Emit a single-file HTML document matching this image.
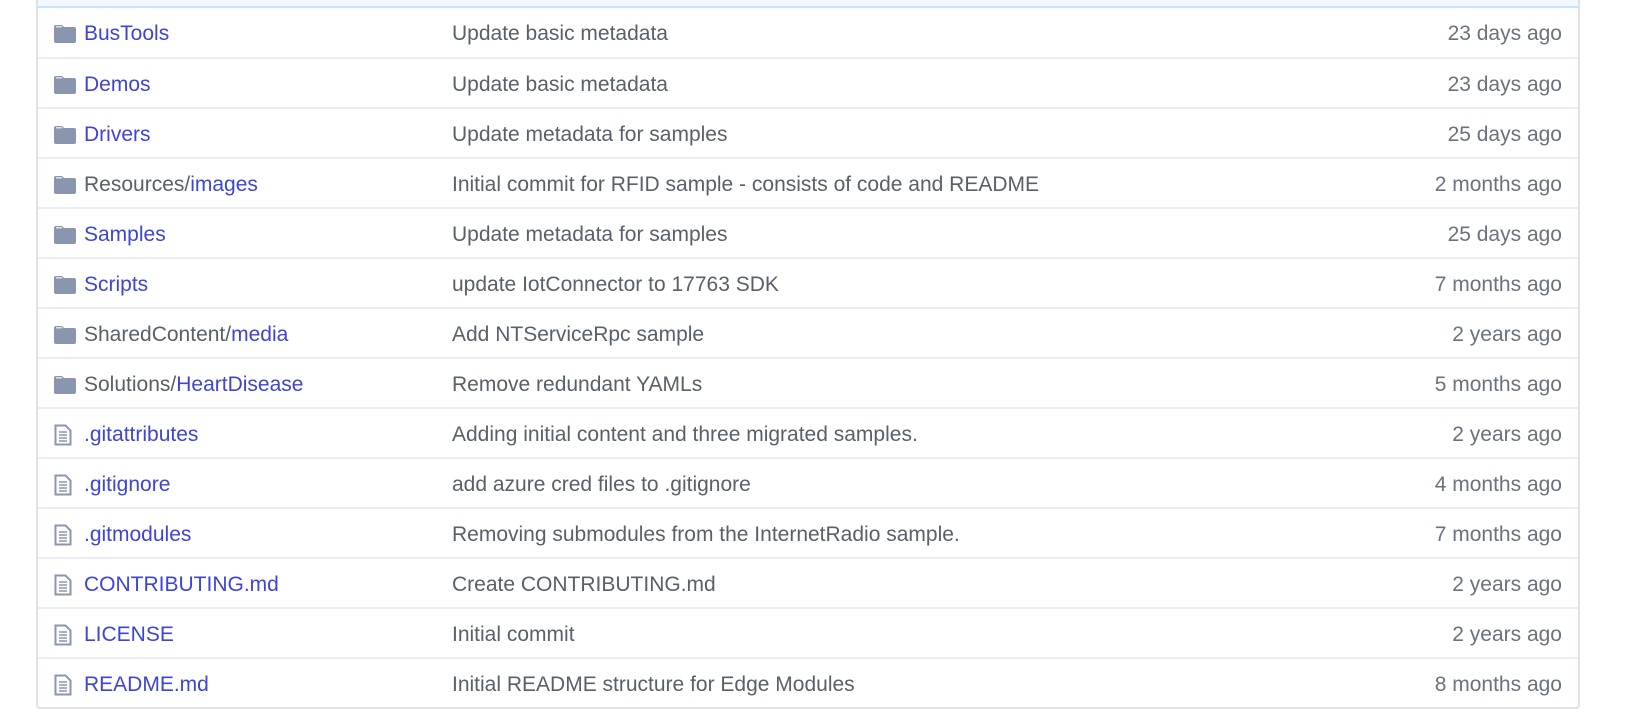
<!DOCTYPE html>
<html><head><meta charset="utf-8"><style>
body{margin:0;background:#fff;font-family:"Liberation Sans",sans-serif;width:1625px;height:717px;overflow:hidden;position:relative}
.top{position:absolute;left:36px;width:1544px;top:0;background:#f1f8ff;border-left:2px solid #dde3ea;border-right:2px solid #dde3ea;box-sizing:border-box;border-bottom:2px solid #c8e1ff;height:8px}
.tbl{position:absolute;left:36px;top:8px;width:1544px;border:2px solid #dde3ea;border-top:none;border-radius:0 0 4px 4px;box-sizing:border-box}
.row{height:50px;border-top:2px solid #eaecef;position:relative;font-size:21px;line-height:52px;box-sizing:border-box}
.row:first-child{border-top:none;height:49px}
.ic{position:absolute;left:16px;top:17px}
.n{position:absolute;left:46px;color:#3d44d6}
.n span{color:#586069}
.m{position:absolute;left:414px;color:#586069}
.a{position:absolute;right:16px;color:#6a737d}
</style></head><body>
<div class="top"></div>
<div class="tbl">
<div class="row"><svg class="ic" width="22" height="18"><path d="M0 2a2 2 0 0 1 2-2h6l2 2h10a2 2 0 0 1 2 2v12a2 2 0 0 1-2 2H2a2 2 0 0 1-2-2z" fill="#8a96ae"/><rect x="2" y="1" width="6" height="1.5" fill="#fff" opacity=".7"/></svg><span class="n">BusTools</span><span class="m">Update basic metadata</span><span class="a">23 days ago</span></div>
<div class="row"><svg class="ic" width="22" height="18"><path d="M0 2a2 2 0 0 1 2-2h6l2 2h10a2 2 0 0 1 2 2v12a2 2 0 0 1-2 2H2a2 2 0 0 1-2-2z" fill="#8a96ae"/><rect x="2" y="1" width="6" height="1.5" fill="#fff" opacity=".7"/></svg><span class="n">Demos</span><span class="m">Update basic metadata</span><span class="a">23 days ago</span></div>
<div class="row"><svg class="ic" width="22" height="18"><path d="M0 2a2 2 0 0 1 2-2h6l2 2h10a2 2 0 0 1 2 2v12a2 2 0 0 1-2 2H2a2 2 0 0 1-2-2z" fill="#8a96ae"/><rect x="2" y="1" width="6" height="1.5" fill="#fff" opacity=".7"/></svg><span class="n">Drivers</span><span class="m">Update metadata for samples</span><span class="a">25 days ago</span></div>
<div class="row"><svg class="ic" width="22" height="18"><path d="M0 2a2 2 0 0 1 2-2h6l2 2h10a2 2 0 0 1 2 2v12a2 2 0 0 1-2 2H2a2 2 0 0 1-2-2z" fill="#8a96ae"/><rect x="2" y="1" width="6" height="1.5" fill="#fff" opacity=".7"/></svg><span class="n"><span>Resources/</span>images</span><span class="m">Initial commit for RFID sample - consists of code and README</span><span class="a">2 months ago</span></div>
<div class="row"><svg class="ic" width="22" height="18"><path d="M0 2a2 2 0 0 1 2-2h6l2 2h10a2 2 0 0 1 2 2v12a2 2 0 0 1-2 2H2a2 2 0 0 1-2-2z" fill="#8a96ae"/><rect x="2" y="1" width="6" height="1.5" fill="#fff" opacity=".7"/></svg><span class="n">Samples</span><span class="m">Update metadata for samples</span><span class="a">25 days ago</span></div>
<div class="row"><svg class="ic" width="22" height="18"><path d="M0 2a2 2 0 0 1 2-2h6l2 2h10a2 2 0 0 1 2 2v12a2 2 0 0 1-2 2H2a2 2 0 0 1-2-2z" fill="#8a96ae"/><rect x="2" y="1" width="6" height="1.5" fill="#fff" opacity=".7"/></svg><span class="n">Scripts</span><span class="m">update IotConnector to 17763 SDK</span><span class="a">7 months ago</span></div>
<div class="row"><svg class="ic" width="22" height="18"><path d="M0 2a2 2 0 0 1 2-2h6l2 2h10a2 2 0 0 1 2 2v12a2 2 0 0 1-2 2H2a2 2 0 0 1-2-2z" fill="#8a96ae"/><rect x="2" y="1" width="6" height="1.5" fill="#fff" opacity=".7"/></svg><span class="n"><span>SharedContent/</span>media</span><span class="m">Add NTServiceRpc sample</span><span class="a">2 years ago</span></div>
<div class="row"><svg class="ic" width="22" height="18"><path d="M0 2a2 2 0 0 1 2-2h6l2 2h10a2 2 0 0 1 2 2v12a2 2 0 0 1-2 2H2a2 2 0 0 1-2-2z" fill="#8a96ae"/><rect x="2" y="1" width="6" height="1.5" fill="#fff" opacity=".7"/></svg><span class="n"><span>Solutions/</span>HeartDisease</span><span class="m">Remove redundant YAMLs</span><span class="a">5 months ago</span></div>
<div class="row"><svg class="ic" style="top:15px" width="18" height="22"><path d="M1.5 1.5h10l5 5v14h-15z" fill="none" stroke="#8a96ae" stroke-width="2"/><path d="M5 8h8M5 11h8M5 14h8M5 17h8" stroke="#8a96ae" stroke-width="1.5"/></svg><span class="n">.gitattributes</span><span class="m">Adding initial content and three migrated samples.</span><span class="a">2 years ago</span></div>
<div class="row"><svg class="ic" style="top:15px" width="18" height="22"><path d="M1.5 1.5h10l5 5v14h-15z" fill="none" stroke="#8a96ae" stroke-width="2"/><path d="M5 8h8M5 11h8M5 14h8M5 17h8" stroke="#8a96ae" stroke-width="1.5"/></svg><span class="n">.gitignore</span><span class="m">add azure cred files to .gitignore</span><span class="a">4 months ago</span></div>
<div class="row"><svg class="ic" style="top:15px" width="18" height="22"><path d="M1.5 1.5h10l5 5v14h-15z" fill="none" stroke="#8a96ae" stroke-width="2"/><path d="M5 8h8M5 11h8M5 14h8M5 17h8" stroke="#8a96ae" stroke-width="1.5"/></svg><span class="n">.gitmodules</span><span class="m">Removing submodules from the InternetRadio sample.</span><span class="a">7 months ago</span></div>
<div class="row"><svg class="ic" style="top:15px" width="18" height="22"><path d="M1.5 1.5h10l5 5v14h-15z" fill="none" stroke="#8a96ae" stroke-width="2"/><path d="M5 8h8M5 11h8M5 14h8M5 17h8" stroke="#8a96ae" stroke-width="1.5"/></svg><span class="n">CONTRIBUTING.md</span><span class="m">Create CONTRIBUTING.md</span><span class="a">2 years ago</span></div>
<div class="row"><svg class="ic" style="top:15px" width="18" height="22"><path d="M1.5 1.5h10l5 5v14h-15z" fill="none" stroke="#8a96ae" stroke-width="2"/><path d="M5 8h8M5 11h8M5 14h8M5 17h8" stroke="#8a96ae" stroke-width="1.5"/></svg><span class="n">LICENSE</span><span class="m">Initial commit</span><span class="a">2 years ago</span></div>
<div class="row"><svg class="ic" style="top:15px" width="18" height="22"><path d="M1.5 1.5h10l5 5v14h-15z" fill="none" stroke="#8a96ae" stroke-width="2"/><path d="M5 8h8M5 11h8M5 14h8M5 17h8" stroke="#8a96ae" stroke-width="1.5"/></svg><span class="n">README.md</span><span class="m">Initial README structure for Edge Modules</span><span class="a">8 months ago</span></div>
</div>
</body></html>
